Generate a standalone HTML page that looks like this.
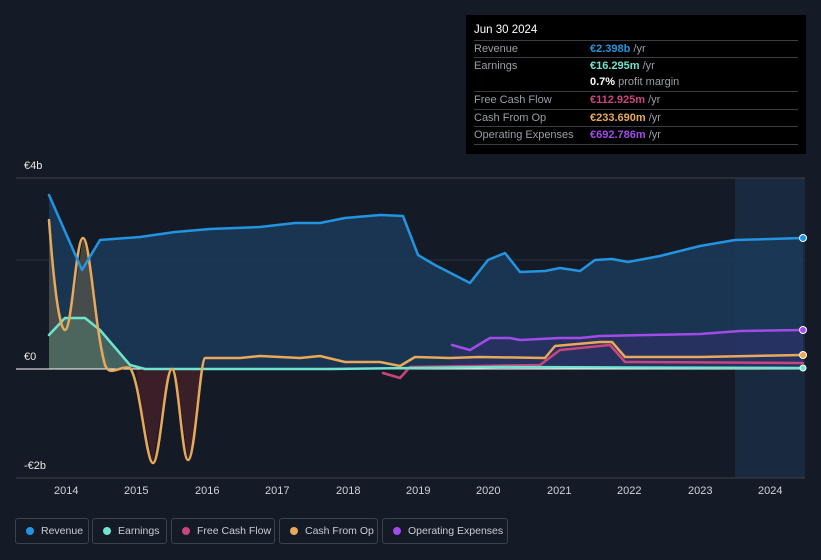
<!DOCTYPE html>
<html><head><style>
html,body{margin:0;width:821px;height:560px;overflow:hidden}
body{background:#151b26;font-family:"Liberation Sans",sans-serif;position:relative}
.tip{position:absolute;left:466px;top:15px;width:340px;height:139px;background:#000;color:#fff;font-size:11px}
.tip .h{position:absolute;left:8px;top:9px;font-size:11.5px}
.row{position:absolute;left:8px;width:324px;height:17px;border-top:1px solid #3a3d44;line-height:17px;color:#9a9ea6;white-space:nowrap}
.row span{position:absolute;left:116px;font-weight:bold}
.row i{font-style:normal;color:#9a9ea6;font-weight:normal}
.leg{position:absolute;top:518px;height:26px;border:1px solid #3b414d;border-radius:3px;color:#c8ccd3;font-size:10.5px;line-height:24px;box-sizing:border-box;white-space:nowrap}
.leg b{position:absolute;left:10px;top:8px;width:8px;height:8px;border-radius:50%}
.leg span{position:absolute;left:25px}
.ax{position:absolute;color:#e8e8e8;font-size:11px}
</style></head><body>
<svg width="821" height="560" style="position:absolute;left:0;top:0">
<rect x="735" y="178" width="70" height="300" fill="#1a2a3e"/>
<line x1="16" y1="178" x2="805" y2="178" stroke="#3a3f48"/>
<line x1="16" y1="260" x2="805" y2="260" stroke="#283040"/>
<line x1="16" y1="478" x2="805" y2="478" stroke="#3a3f48"/>
<path d="M49,195 L82,270 L100,240 L140,237 L175,232 L210,229 L260,227 L295,223 L320,223 L345,218 L380,215 L403,216 L418,255 L435,265 L470,283 L488,260 L505,253 L520,272 L545,271 L560,268 L580,271 L595,260 L612,259 L628,262 L660,256 L700,246 L735,240 L770,239 L803,238 L803,369 L49,369Z" fill="#1b3a5a" opacity="0.85"/>
<path d="M49,220 L55,290 L65,330 L75,290 L83,238 L90,270 L100,340 L112,369 L49,369Z" fill="#5a5548" opacity="0.7"/>
<path d="M49,335 L65,318 L85,318 L100,330 L130,365 L145,369 L49,369Z" fill="#4e6d62" opacity="0.8"/>
<path d="M136,369 L140,400 L153,463 L163,400 L170,369 L175,369 L180,400 L188,460 L197,420 L203,369Z" fill="#3a1e28"/>
<path d="M452,345 L470,350 L490,338 L510,338 L520,340 L560,338 L580,338 L600,336 L700,334 L740,331 L803,330 L803,369 L452,369Z" fill="#2e2f6a" opacity="0.6"/>
<line x1="16" y1="369" x2="805" y2="369" stroke="#ffffff" stroke-width="1"/>
<g fill="none" stroke-width="2.5" stroke-linejoin="round" stroke-linecap="round">
<path d="M383,373 L400,378 L410,367 L540,365 L560,350 L610,345 L625,362 L803,363" stroke="#c8467e"/>
<path d="M49,335 L65,318 L85,318 L100,330 L130,365 L145,369 L330,369 L500,367 L803,368" stroke="#6fe3cd"/>
<path d="M49,220 C52,260 58,330 65,330 C72,330 76,238 83,238 C90,238 95,330 105,365 C110,378 120,365 130,368 C140,380 146,463 153,463 C160,463 165,369 172,369 C178,369 182,460 188,460 C195,460 200,360 205,358 L240,358 L260,356 L300,358 L320,356 L345,362 L380,362 L400,366 L415,357 L450,358 L480,357 L545,358 L555,346 L600,342 L612,342 L625,357 L700,357 L803,355" stroke="#e8a95a"/>
<path d="M452,345 L470,350 L490,338 L510,338 L520,340 L560,338 L580,338 L600,336 L700,334 L740,331 L803,330" stroke="#a14ce8"/>
<path d="M49,195 L82,270 L100,240 L140,237 L175,232 L210,229 L260,227 L295,223 L320,223 L345,218 L380,215 L403,216 L418,255 L435,265 L470,283 L488,260 L505,253 L520,272 L545,271 L560,268 L580,271 L595,260 L612,259 L628,262 L660,256 L700,246 L735,240 L770,239 L803,238" stroke="#2394e0"/>
</g>
<circle cx="803" cy="238" r="3.5" fill="#2394e0" stroke="#fff"/>
<circle cx="803" cy="330" r="3.5" fill="#a14ce8" stroke="#fff"/>
<circle cx="803" cy="355" r="3.5" fill="#e8a95a" stroke="#fff"/>
<circle cx="803" cy="368" r="3" fill="#6fe3cd" stroke="#fff"/>
</svg>
<div class="ax" style="left:24px;top:160px">€4b</div>
<div class="ax" style="left:24px;top:351px">€0</div>
<div class="ax" style="left:24px;top:460px">-€2b</div>
<div class="ax" style="left:54px;top:485px;color:#d0d3d8">2014</div>
<div class="ax" style="left:124px;top:485px;color:#d0d3d8">2015</div>
<div class="ax" style="left:195px;top:485px;color:#d0d3d8">2016</div>
<div class="ax" style="left:265px;top:485px;color:#d0d3d8">2017</div>
<div class="ax" style="left:336px;top:485px;color:#d0d3d8">2018</div>
<div class="ax" style="left:406px;top:485px;color:#d0d3d8">2019</div>
<div class="ax" style="left:476px;top:485px;color:#d0d3d8">2020</div>
<div class="ax" style="left:547px;top:485px;color:#d0d3d8">2021</div>
<div class="ax" style="left:617px;top:485px;color:#d0d3d8">2022</div>
<div class="ax" style="left:688px;top:485px;color:#d0d3d8">2023</div>
<div class="ax" style="left:758px;top:485px;color:#d0d3d8">2024</div>
<div class="tip">
<div class="h">Jun 30 2024</div>
<div class="row" style="top:25px">Revenue<span style="color:#2394e0">€2.398b <i>/yr</i></span></div>
<div class="row" style="top:42px">Earnings<span style="color:#6fe3cd">€16.295m <i>/yr</i></span></div>
<div class="row" style="top:59px;border-top:none"><span style="color:#fff">0.7% <i>profit margin</i></span></div>
<div class="row" style="top:76px">Free Cash Flow<span style="color:#c8467e">€112.925m <i>/yr</i></span></div>
<div class="row" style="top:94px">Cash From Op<span style="color:#e8a95a">€233.690m <i>/yr</i></span></div>
<div class="row" style="top:111px">Operating Expenses<span style="color:#a14ce8">€692.786m <i>/yr</i></span></div>
<div class="row" style="top:129px;height:0"></div>
</div>
<div class="leg" style="left:15px;width:74px"><b style="background:#2394e0"></b><span>Revenue</span></div>
<div class="leg" style="left:92px;width:75px"><b style="background:#6fe3cd"></b><span>Earnings</span></div>
<div class="leg" style="left:171px;width:104px"><b style="background:#c8467e"></b><span>Free Cash Flow</span></div>
<div class="leg" style="left:279px;width:99px"><b style="background:#e8a95a"></b><span>Cash From Op</span></div>
<div class="leg" style="left:382px;width:126px"><b style="background:#a14ce8"></b><span>Operating Expenses</span></div>
</body></html>
